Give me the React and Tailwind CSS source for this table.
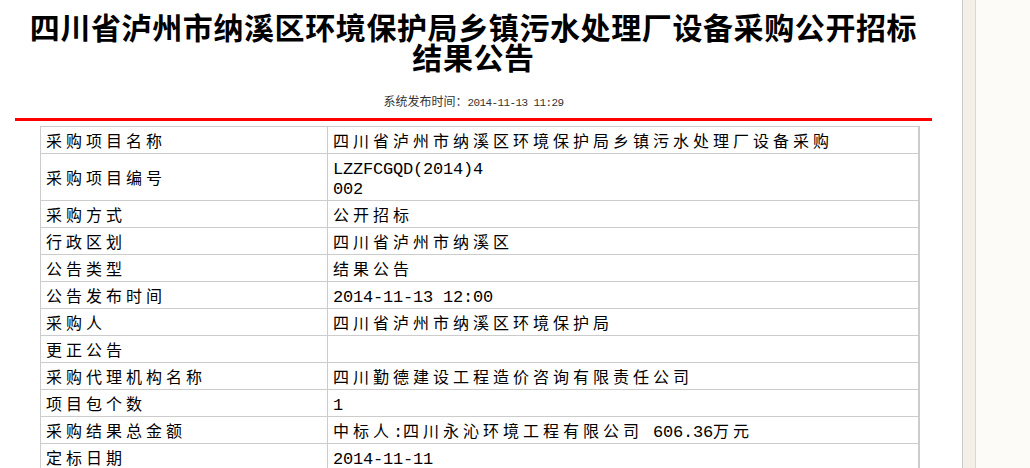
const rows = [
  ['采购项目名称', '四川省泸州市纳溪区环境保护局乡镇污水处理厂设备采购'],
  ['采购项目编号', ['LZZFCGQD(2014)4', '002']],
  ['采购方式', '公开招标'],
  ['行政区划', '四川省泸州市纳溪区'],
  ['公告类型', '结果公告'],
  ['公告发布时间', '2014-11-13 12:00'],
  ['采购人', '四川省泸州市纳溪区环境保护局'],
  ['更正公告', ''],
  ['采购代理机构名称', '四川勤德建设工程造价咨询有限责任公司'],
  ['项目包个数', '1'],
  ['采购结果总金额', '中标人:四川永沁环境工程有限公司 606.36万元'],
  ['定标日期', '2014-11-11'],
]

// ascii runs get a half-width mono face, like the old song font
function Mixed({ text }) {
  return text.split(/([\x20-\x7e]+)/).filter(Boolean).map((part, i) =>
    /^[\x20-\x7e]+$/.test(part)
      ? <span key={i} className="font-['Liberation_Mono',monospace] text-[17px] tracking-[-0.2px] whitespace-pre">{part}</span>
      : <span key={i}>{part}</span>
  )
}

function Line({ children }) {
  return <div className="h-[20px] leading-[20px] whitespace-nowrap">{children}</div>
}

function Value({ value }) {
  const lines = Array.isArray(value) ? value : [value]
  return lines.map((line, i) => <Line key={i}><Mixed text={line} /></Line>)
}

export default function App() {
  return (
    <div className="flex w-[1030px] h-[468px] overflow-hidden bg-white text-black font-['Noto_Sans_CJK_SC',sans-serif]">
      <div className="w-[962px] shrink-0">
        <div className="ml-[15px] w-[917px]">
          {/* 标题 */}
          <h1 className="pt-[11px] text-center text-[30px] leading-[30px] tracking-[0.6px] font-bold whitespace-nowrap">
            <div className="h-[30px]">四川省泸州市纳溪区环境保护局乡镇污水处理厂设备采购公开招标</div>
            <div className="h-[30px]">结果公告</div>
          </h1>
          <p className="mt-[21px] h-[18px] text-center text-[12px] leading-[18px] text-[#333]">
            系统发布时间：<span className="font-['Liberation_Mono',monospace] text-[11px] tracking-[-0.6px] whitespace-pre">2014-11-13 11:29</span>
          </p>
          <div className="mt-[8px] h-[3px] bg-[#ff0000]" />

          {/* 明细表 */}
          <table className="mt-[5px] ml-[25px] w-[880px] table-fixed border-collapse text-[16px] tracking-[4px]">
            <colgroup>
              <col className="w-[287px]" />
              <col />
            </colgroup>
            <tbody>
              {rows.map(([label, value]) => (
                <tr key={label}>
                  <td className="border border-[#cccccc] px-[5px] py-[3px] align-middle">
                    <Line>{label}</Line>
                  </td>
                  <td className="border border-r-2 border-[#cccccc] px-[5px] py-[3px] align-middle">
                    <Value value={value} />
                  </td>
                </tr>
              ))}
            </tbody>
          </table>
        </div>
      </div>

      {/* 右侧边栏 */}
      <div className="w-px shrink-0 bg-[#c9c9c9]" />
      <div className="w-[12px] shrink-0 bg-[#f5f0e7]" />
      <div className="w-px shrink-0 bg-[#e8d6b8]" />
      <div className="flex-1 bg-[#fdfbf8]" />
    </div>
  )
}
